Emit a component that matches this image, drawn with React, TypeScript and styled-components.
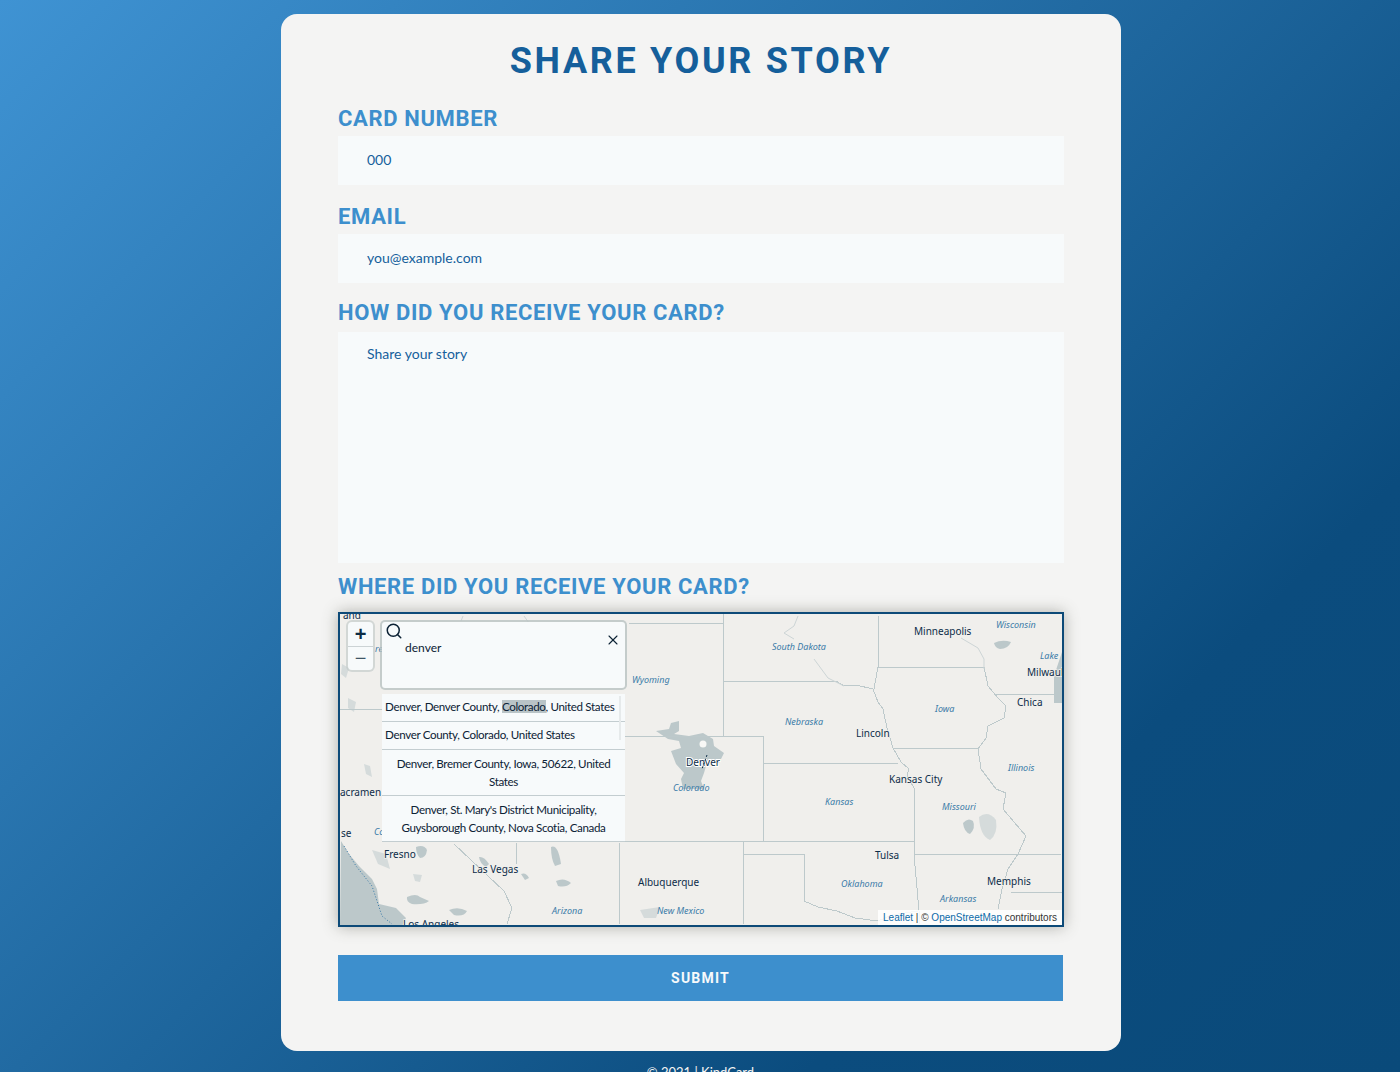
import React from 'react';
import styled, { createGlobalStyle } from 'styled-components';
import { Search, X } from 'lucide-react';

const GlobalStyle = createGlobalStyle`
  html, body {
    margin: 0;
    padding: 0;
    height: 100%;
    overflow: hidden;
  }
  body {
    font-family: Lato, sans-serif;
  }
`;

const Page = styled.div`
  height: 1072px;
  overflow: hidden;
  padding-top: 14px;
  box-sizing: border-box;
  background: linear-gradient(135deg, #3f93d3 0%, #0b4c7e 76%, #0a4a7a 100%);
`;

const Card = styled.form`
  width: 840px;
  height: 1037px;
  margin-left: 281px;
  padding: 0 57px;
  box-sizing: border-box;
  background: #f4f4f3;
  border-radius: 16px;
  display: flex;
  flex-direction: column;
`;

const Title = styled.h1`
  margin: 26px 0 5px;
  height: 42px;
  font: 700 36px/42px Roboto, sans-serif;
  letter-spacing: 2.65px;
  text-align: center;
  color: #155f9b;
`;

const Label = styled.label<{ $low?: boolean }>`
  margin: ${props => (props.$low ? '19px 0 4px' : '17px 0 6px')};
  height: 26px;
  font: 700 22px/26px Roboto, sans-serif;
  letter-spacing: 0.65px;
  color: #3d8fcd;
`;

const MapLabel = styled(Label)`
  margin: 11px 0 12px;
`;

const TextInput = styled.div`
  height: 49px;
  padding-left: 29px;
  box-sizing: border-box;
  background: #f7fafb;
  font: 400 14px/47px Lato, sans-serif;
  color: #155f9b;
`;

const TextArea = styled.div`
  height: 231px;
  padding: 11px 0 0 29px;
  box-sizing: border-box;
  background: #f7fafb;
  font: 400 14px/22px Lato, sans-serif;
  color: #155f9b;
`;

const MapFrame = styled.div`
  position: relative;
  height: 315px;
  box-sizing: border-box;
  border: 2px solid #0d4a78;
  background: #f0efec;
  box-shadow: 0 0 14px rgba(90, 90, 80, 0.45);
  overflow: hidden;
`;

const MapDrawing = styled.svg`
  display: block;
  width: 100%;
  height: 100%;
`;

const ZoomControl = styled.div`
  position: absolute;
  left: 8px;
  top: 8px;
  width: 25px;
  height: 48px;
  border-radius: 4px;
  background: #f7fafb;
  box-shadow: 0 0 0 2px rgba(190, 198, 198, 0.6);
  display: flex;
  flex-direction: column;
`;

const ZoomButton = styled.div<{ $top?: boolean }>`
  flex: 1;
  display: flex;
  align-items: center;
  justify-content: center;
  font: ${props => (props.$top ? 700 : 400)} 20px/1 'Liberation Sans', sans-serif;
  color: ${props => (props.$top ? '#0c2c44' : '#3f5566')};
  border-bottom: ${props => (props.$top ? '1px solid #ccd3d5' : 'none')};
`;

const SearchBox = styled.div`
  position: absolute;
  left: 42px;
  top: 8px;
  width: 243px;
  height: 66px;
  box-sizing: border-box;
  border-radius: 3px;
  background: #f7fafb;
  box-shadow: 0 0 0 2px rgba(185, 195, 195, 0.8);
`;

const SearchIcon = styled(Search)`
  position: absolute;
  left: 3px;
  top: 0;
  color: #0c2235;
`;

const ClearIcon = styled(X)`
  position: absolute;
  right: 4px;
  top: 10px;
  color: #0c2235;
`;

const SearchValue = styled.div`
  position: absolute;
  left: 23px;
  top: 17px;
  font: 400 12px/18px Lato, sans-serif;
  color: #0c2235;
`;

const Results = styled.ul`
  position: absolute;
  left: 42px;
  top: 80px;
  width: 243px;
  margin: 0;
  padding: 0;
  list-style: none;
  background: #f7fafb;
`;

const ScrollRail = styled.div`
  position: absolute;
  right: 4px;
  top: 2px;
  width: 2px;
  height: 44px;
  background: #e6eaeb;
`;

const Result = styled.li<{ $left?: boolean }>`
  padding: ${props => (props.$left ? '4px 3px 5px' : '5px 12px 4px')};
  border-bottom: 1px solid #c3cdd0;
  font: 400 11.6px/18px Lato, sans-serif;
  letter-spacing: -0.35px;
  text-align: ${props => (props.$left ? 'left' : 'center')};
  color: #0c2235;
  white-space: ${props => (props.$left ? 'nowrap' : 'normal')};
`;

const Highlight = styled.span`
  background: #b9c4c7;
`;

const Attribution = styled.div`
  position: absolute;
  right: 0;
  bottom: 0;
  padding: 0 5px;
  background: rgba(255, 255, 255, 0.85);
  font: 400 10px/15px 'Liberation Sans', sans-serif;
  color: #333;
`;

const AttributionLink = styled.span`
  color: #0b6aa8;
`;

const SubmitButton = styled.div`
  margin-top: 28px;
  width: 725px;
  height: 46px;
  background: #3d8fcd;
  font: 700 14px/46px Roboto, sans-serif;
  letter-spacing: 1.2px;
  text-align: center;
  color: #f7fafb;
`;

const Footer = styled.div`
  margin-top: 12px;
  padding-left: 1px;
  text-align: center;
  font: 400 13px/18px Lato, sans-serif;
  color: #f4f4f3;
`;

// map coordinates are relative to the inside of the frame
const borders = [
  'M383 0V122',
  'M289 9H383',
  'M282 122H423V227',
  'M383 67H496L504 72L516 71L533 75L538 88L543 95L547 114L553 134L561 148L569 155L567 162L574 174V240',
  'M423 149H558',
  'M43 227H574',
  'M403 227V310',
  'M403 240H464V287L478 293L497 297L515 304L538 307L552 301L578 297',
  'M574 240L579 297V310',
  'M553 134H638',
  'M538 2V53H644',
  'M644 53L648 72L658 84L666 92L664 104L648 112L646 124L638 135L641 155L656 175L666 179L663 195L674 208L686 222L678 240L668 255L662 275L658 295',
  'M656 80H714',
  'M574 240H721',
  'M671 278H723',
  'M279 229V310',
  'M0 95H42',
  'M722 278V310',
  'M538 53L534 75',
  'M114 230L164 277L172 294L167 310',
  'M176 229V250',
];

const rivers = [
  'M458 2L454 12L444 19L454 25',
  'M474 45L488 64L504 72',
  'M621 24L638 34L644 45L644 55',
  'M123 2L121 7',
  'M184 2L189 9',
];

const waterBlobs = [
  // Denver
  'M316 117L329 115L331 109L339 107L339 117L334 120L349 122L363 119L373 125L374 132L384 139L379 149L366 152L364 159L361 167L364 175L343 175L341 165L344 159L336 150L331 137L341 134L339 127L328 125Z',
  // Pacific
  'M1 227L9 240L19 252L32 265L37 275L39 290L56 294L66 304L62 312H0Z',
  // Lake Michigan
  'M723 35L714 62L714 89L723 89Z',
  'M623 209Q628 203 633 207Q636 214 630 220Q624 218 623 209Z',
  'M654 29Q662 25 671 28Q668 35 660 35Q655 34 654 29Z',
  'M76 233Q84 230 87 236Q86 244 80 244Q76 240 76 233Z',
  'M139 243Q144 242 149 250L146 253Q140 250 139 243Z',
  'M181 260Q186 258 189 264L185 266Z',
  'M211 233Q218 230 221 250L215 252Q211 245 211 233Z',
  'M216 267Q224 263 231 269Q226 274 218 272Z',
  'M67 283Q76 279 80 283L89 287Q84 291 72 290Q66 288 67 283Z',
  'M109 296Q118 292 127 297Q124 303 114 301Z',
];

const stipples = [
  'M639 203Q648 196 656 206Q658 220 650 226Q640 222 639 203Z',
  'M32 236L46 240L50 255L38 250Z',
  'M8 84L16 88L14 98L8 94Z',
  'M24 150L30 152L32 163L26 160Z',
  'M2 50L9 54L6 64L1 60Z',
  'M300 296L320 293L316 304L304 304Z',
  'M73 260L82 261L80 268L75 267Z',
];

const cities: [string, number, number][] = [
  ['Minneapolis', 574, 21],
  ['Milwauk', 687, 62],
  ['Chica', 677, 92],
  ['Lincoln', 516, 123],
  ['Kansas City', 549, 169],
  ['Tulsa', 535, 245],
  ['Memphis', 647, 271],
  ['Albuquerque', 298, 272],
  ['Las Vegas', 132, 259],
  ['Fresno', 44, 244],
  ['Los Angeles', 63, 314],
  ['acramen', 0, 182],
  ['and', 3, 5],
  ['se', 1, 223],
];

const states: [string, number, number][] = [
  ['South Dakota', 432, 36],
  ['Wisconsin', 656, 14],
  ['Lake', 700, 45],
  ['Wyoming', 292, 69],
  ['Nebraska', 445, 111],
  ['Iowa', 595, 98],
  ['Illinois', 668, 157],
  ['Colorado', 333, 177],
  ['Kansas', 485, 191],
  ['Missouri', 602, 196],
  ['Oklahoma', 501, 273],
  ['Arkansas', 600, 288],
  ['Arizona', 212, 300],
  ['New Mexico', 317, 300],
  ['re', 35, 38],
  ['Co', 34, 221],
];

const usLand = (
  <>
    {waterBlobs.map(d => (
      <path key={d} d={d} fill="#bcc8ca" />
    ))}
    {stipples.map(d => (
      <path key={d} d={d} fill="#d5dbdb" />
    ))}
    <circle cx="363" cy="130" r="3.5" fill="#f8f8f6" />
    {borders.map(d => (
      <path key={d} d={d} fill="none" stroke="#bdc9cb" strokeWidth="1" shapeRendering="crispEdges" />
    ))}
    {rivers.map(d => (
      <path key={d} d={d} fill="none" stroke="#cdd5d6" strokeWidth="1" />
    ))}
    <path d="M4 232L16 252L32 272L42 302L52 310" fill="none" stroke="#3a7ba8" strokeWidth="1" strokeDasharray="1 2" />
    {cities.map(([name, x, y]) => (
      <text
        key={name}
        x={x}
        y={y}
        fontFamily="'Noto Sans', sans-serif"
        fontSize="10"
        fill="#0c2c48"
        stroke="#f0efec"
        strokeWidth="1.5"
        paintOrder="stroke"
      >
        {name}
      </text>
    ))}
    <text
      x="346"
      y="152"
      fontFamily="'Noto Sans', sans-serif"
      fontSize="10"
      fill="#0c2c48"
      stroke="#ffffff"
      strokeWidth="2"
      paintOrder="stroke"
    >
      Denver
    </text>
    <path d="M367 141L362 155" fill="none" stroke="#0c2c48" strokeWidth="1" strokeDasharray="2 2" />
    {states.map(([name, x, y]) => (
      <text key={name} x={x} y={y} fontFamily="'Noto Sans', sans-serif" fontSize="9" fontStyle="italic" fill="#3a7ba8">
        {name}
      </text>
    ))}
  </>
);

export default function App() {
  return (
    <Page>
      <GlobalStyle />
      <Card>
        <Title>SHARE YOUR STORY</Title>
        <Label $low>CARD NUMBER</Label>
        <TextInput>000</TextInput>
        <Label $low>EMAIL</Label>
        <TextInput>you@example.com</TextInput>
        <Label>HOW DID YOU RECEIVE YOUR CARD?</Label>
        <TextArea>Share your story</TextArea>
        <MapLabel>WHERE DID YOU RECEIVE YOUR CARD?</MapLabel>
        <MapFrame>
          <MapDrawing viewBox="0 0 722 311">{usLand}</MapDrawing>
          <ZoomControl>
            <ZoomButton $top>+</ZoomButton>
            <ZoomButton>−</ZoomButton>
          </ZoomControl>
          <SearchBox>
            <SearchIcon size={18} strokeWidth={2} />
            <SearchValue>denver</SearchValue>
            <ClearIcon size={16} strokeWidth={1.6} />
          </SearchBox>
          <Results>
            <ScrollRail />
            <Result $left>
              Denver, Denver County, <Highlight>Colorado</Highlight>, United States
            </Result>
            <Result $left>Denver County, Colorado, United States</Result>
            <Result>Denver, Bremer County, Iowa, 50622, United States</Result>
            <Result>Denver, St. Mary's District Municipality, Guysborough County, Nova Scotia, Canada</Result>
          </Results>
          <Attribution>
            <AttributionLink>Leaflet</AttributionLink> | © <AttributionLink>OpenStreetMap</AttributionLink> contributors
          </Attribution>
        </MapFrame>
        <SubmitButton>SUBMIT</SubmitButton>
      </Card>
      <Footer>© 2021 | KindCard</Footer>
    </Page>
  );
}
